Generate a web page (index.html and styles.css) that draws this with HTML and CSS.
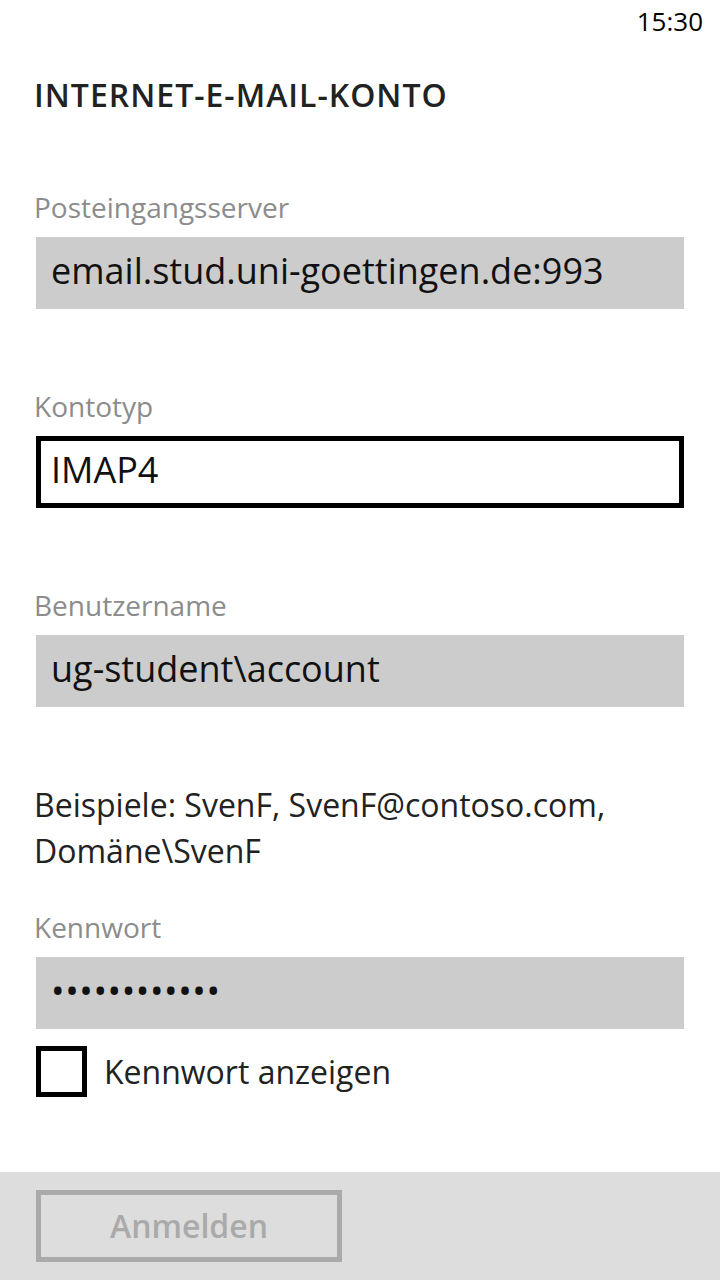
FILE: index.html
```html
<!DOCTYPE html>
<html lang="de">
<head>
<meta charset="utf-8"/>
<meta content="width=device-width, initial-scale=1.0" name="viewport"/>
<title>Internet-E-Mail-Konto</title>
<link rel="stylesheet" href="styles.css">
</head>
<body>
<div class="page">
  <div class="status-bar"><span class="clock">15:30</span></div>

  <h1 class="page-title">INTERNET-E-MAIL-KONTO</h1>

  <div class="field first">
    <div class="field-label">Posteingangsserver</div>
    <div class="text-box">email.stud.uni-goettingen.de:993</div>
  </div>

  <div class="field">
    <div class="field-label">Kontotyp</div>
    <div class="text-box focused">IMAP4</div>
  </div>

  <div class="field">
    <div class="field-label">Benutzername</div>
    <div class="text-box">ug-student\account</div>
  </div>

  <p class="hint">Beispiele: SvenF, SvenF@contoso.com, Domäne\SvenF</p>

  <div class="field compact">
    <div class="field-label">Kennwort</div>
    <div class="text-box password">••••••••••••</div>
  </div>

  <label class="check-row">
    <span class="check-box"></span>
    <span class="check-text">Kennwort anzeigen</span>
  </label>

  <div class="app-bar">
    <button class="app-btn" disabled>Anmelden</button>
  </div>
</div>
</body>
</html>
```

FILE: styles.css
```css
html, body {
  margin: 0;
  padding: 0;
  background-color: #ffffff;
}
body {
  font-family: "Open Sans", "Noto Sans", sans-serif;
  color: #222222;
}
.page {
  width: 720px;
  height: 1280px;
  display: flex;
  flex-direction: column;
  overflow: hidden;
}
.status-bar {
  display: flex;
  justify-content: flex-end;
  padding: 1px 17px 0 0;
  height: 40px;
}
.clock {
  font-size: 26px;
  line-height: 40px;
  color: #000000;
}
.page-title {
  margin: 34px 0 0 34px;
  font-size: 32px;
  font-weight: 600;
  letter-spacing: 1px;
  line-height: 40px;
  color: #222222;
}
.field {
  margin: 79px 36px 0 36px;
}
.field.first {
  margin-top: 74px;
}
.field.compact {
  margin-top: 35px;
}
.field-label {
  margin-left: -2px;
  font-size: 28px;
  line-height: 36px;
  color: #8c8c8c;
}
.text-box {
  margin-top: 12px;
  height: 72px;
  box-sizing: border-box;
  padding: 0 10px 4px 10px;
  border: 5px solid #cccccc;
  background-color: #cccccc;
  font-size: 36px;
  line-height: 58px;
  color: #111111;
  white-space: nowrap;
  overflow: hidden;
}
.text-box.focused {
  border-color: #000000;
  background-color: #ffffff;
}
.text-box.password {
  letter-spacing: 0.6px;
}
.hint {
  margin: 75px 36px 0 34px;
  font-size: 32px;
  line-height: 46px;
  color: #222222;
}
.check-row {
  display: flex;
  align-items: center;
  margin: 17px 0 0 36px;
  height: 51px;
}
.check-box {
  width: 51px;
  height: 51px;
  box-sizing: border-box;
  border: 5px solid #000000;
  background-color: #ffffff;
}
.check-text {
  margin-left: 17px;
  font-size: 32px;
  line-height: 51px;
  color: #222222;
}
.app-bar {
  margin-top: auto;
  height: 108px;
  box-sizing: border-box;
  padding: 18px 0 0 36px;
  background-color: #dddddd;
}
.app-btn {
  width: 306px;
  height: 72px;
  box-sizing: border-box;
  border: 5px solid #aaaaaa;
  background-color: transparent;
  font-family: "Open Sans", "Noto Sans", sans-serif;
  font-size: 32px;
  font-weight: 600;
  line-height: 62px;
  color: #aaaaaa;
  padding: 0;
}
```
